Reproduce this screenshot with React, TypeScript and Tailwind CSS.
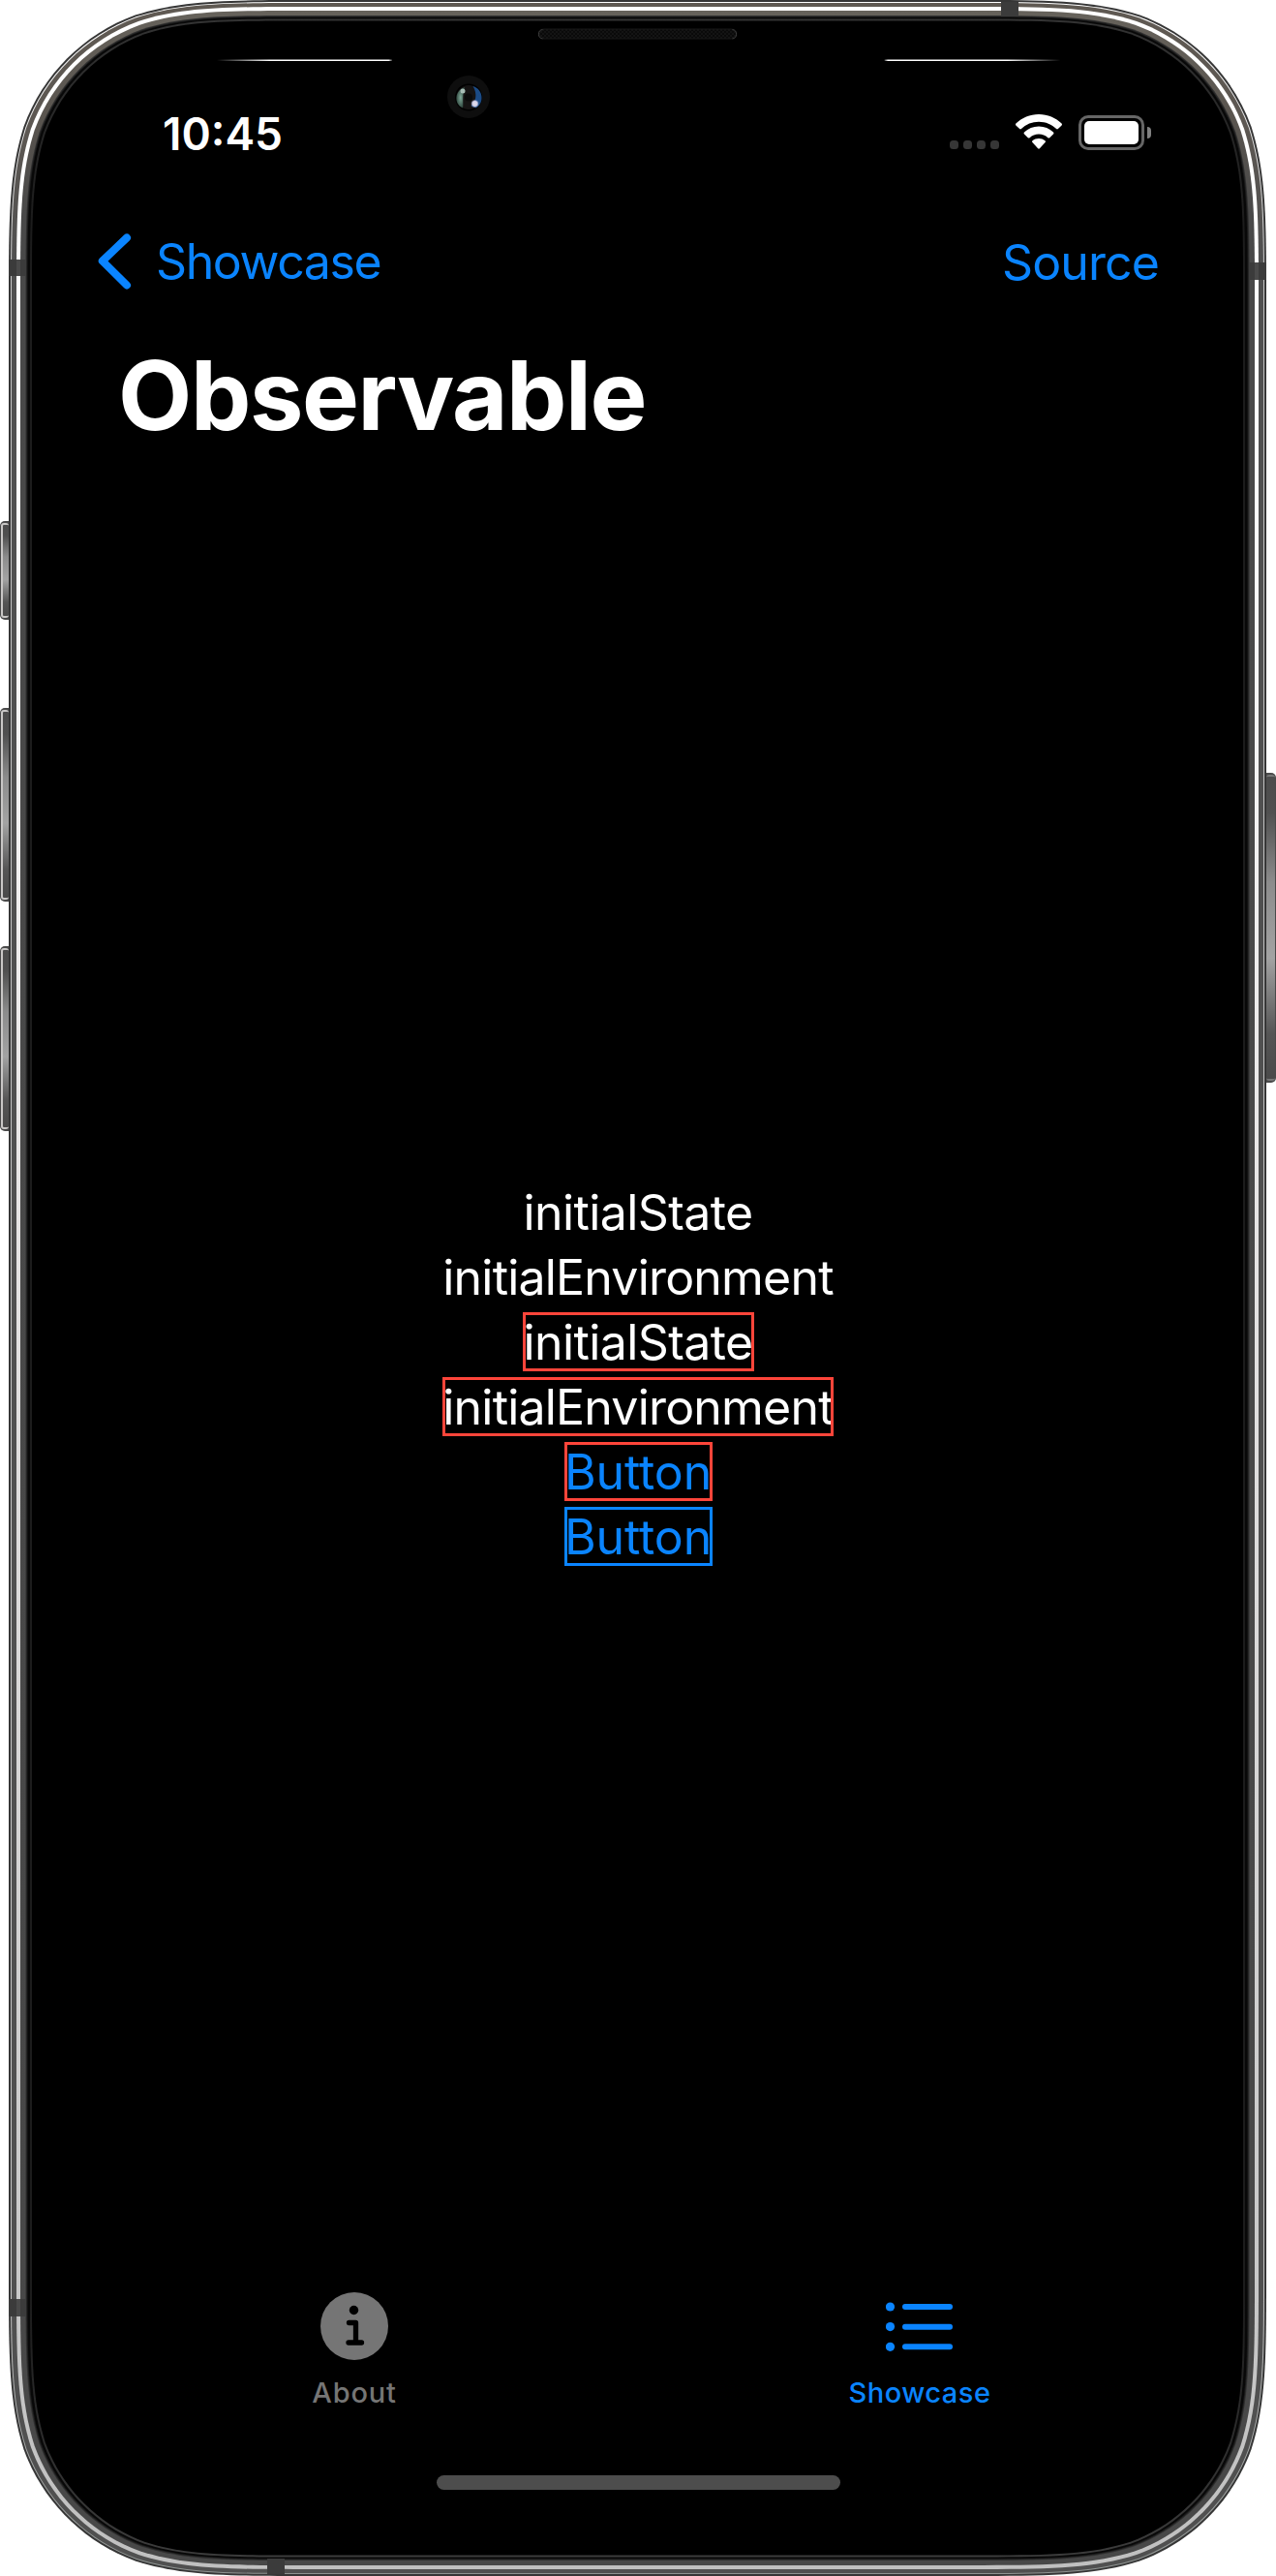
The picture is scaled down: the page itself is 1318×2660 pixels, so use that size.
import React from "react";

/** Rounded rectangle with continuous-curvature corners. */
function smoothRect(x0: number, y0: number, x1: number, y1: number, r: number) {
  const a = 1.5287 * r;
  const b = 1.0885 * r;
  const c = 0.8684 * r;
  const d = 0.6315 * r;
  const e = 0.0749 * r;
  const f = 0.3728 * r;
  const g = 0.1691 * r;
  return [
    `M${x0 + a} ${y0}H${x1 - a}`,
    `C${x1 - b} ${y0} ${x1 - c} ${y0} ${x1 - d} ${y0 + e}`,
    `C${x1 - f} ${y0 + g} ${x1 - g} ${y0 + f} ${x1 - e} ${y0 + d}`,
    `C${x1} ${y0 + c} ${x1} ${y0 + b} ${x1} ${y0 + a}`,
    `V${y1 - a}`,
    `C${x1} ${y1 - b} ${x1} ${y1 - c} ${x1 - e} ${y1 - d}`,
    `C${x1 - g} ${y1 - f} ${x1 - f} ${y1 - g} ${x1 - d} ${y1 - e}`,
    `C${x1 - c} ${y1} ${x1 - b} ${y1} ${x1 - a} ${y1}`,
    `H${x0 + a}`,
    `C${x0 + b} ${y1} ${x0 + c} ${y1} ${x0 + d} ${y1 - e}`,
    `C${x0 + f} ${y1 - g} ${x0 + g} ${y1 - f} ${x0 + e} ${y1 - d}`,
    `C${x0} ${y1 - c} ${x0} ${y1 - b} ${x0} ${y1 - a}`,
    `V${y0 + a}`,
    `C${x0} ${y0 + b} ${x0} ${y0 + c} ${x0 + e} ${y0 + d}`,
    `C${x0 + g} ${y0 + f} ${x0 + f} ${y0 + g} ${x0 + d} ${y0 + e}`,
    `C${x0 + c} ${y0} ${x0 + b} ${y0} ${x0 + a} ${y0}Z`,
  ].join("");
}

/** Frame ring: side inset and top/bottom inset from the outer edge. */
function ring(side: number, cap: number) {
  return smoothRect(9 + side, cap, 1308 - side, 2660 - cap, 207 - (side + cap) / 2);
}

function SideButton({ x, y, w, h, flip }: { x: number; y: number; w: number; h: number; flip?: boolean }) {
  return (
    <g>
      <rect x={x} y={y} width={w + 6} height={h} rx="5" fill="#4a4a4a" transform={flip ? "translate(-6 0)" : undefined} />
      <rect x={flip ? x : x + 1} y={y + 2} width={w - 1} height={h - 4} rx="3" fill={flip ? "#777" : "#c9c7c6"} />
      <rect x={flip ? x : x + 3} y={y + 4} width={flip ? w - 1 : w - 3} height={h - 8} rx="1" fill="url(#key)" />
    </g>
  );
}

function DeviceFrame() {
  return (
    <svg className="pointer-events-none absolute inset-0" width="1318" height="2660" viewBox="0 0 1318 2660" aria-hidden="true">
      <defs>
        <linearGradient id="key" x1="0" y1="0" x2="0" y2="1">
          <stop offset="0" stopColor="#4c4c4c" />
          <stop offset="0.12" stopColor="#505050" />
          <stop offset="0.35" stopColor="#8c8c8c" />
          <stop offset="0.6" stopColor="#a3a3a3" />
          <stop offset="0.85" stopColor="#555" />
          <stop offset="1" stopColor="#4a4a4a" />
        </linearGradient>
        <linearGradient id="steel" x1="0" y1="0" x2="0" y2="1">
          <stop offset="0" stopColor="#5f5952" />
          <stop offset="0.05" stopColor="#5c5752" />
          <stop offset="0.1" stopColor="#505050" />
          <stop offset="1" stopColor="#505050" />
        </linearGradient>
        <linearGradient id="steelIn" x1="0" y1="0" x2="0" y2="1">
          <stop offset="0" stopColor="#66625b" />
          <stop offset="0.04" stopColor="#5a554f" />
          <stop offset="0.08" stopColor="#494949" />
          <stop offset="1" stopColor="#484848" />
        </linearGradient>
        <linearGradient id="shine" x1="0" y1="0" x2="0" y2="1">
          <stop offset="0" stopColor="#fff" />
          <stop offset="0.2" stopColor="#fcfcfc" />
          <stop offset="0.45" stopColor="#e8e6e6" />
          <stop offset="0.85" stopColor="#cbcbcb" />
          <stop offset="1" stopColor="#c0c0c0" />
        </linearGradient>
        <linearGradient id="hair" x1="0" y1="0" x2="0" y2="1">
          <stop offset="0" stopColor="#fff" />
          <stop offset="0.12" stopColor="#c4c4c4" />
          <stop offset="0.9" stopColor="#c4c4c4" />
          <stop offset="1" stopColor="#8d9290" />
        </linearGradient>
        <linearGradient id="rim" x1="0" y1="0" x2="0" y2="1">
          <stop offset="0" stopColor="#333" />
          <stop offset="0.08" stopColor="#1c1c1c" />
          <stop offset="0.9" stopColor="#1c1c1c" />
          <stop offset="1" stopColor="#3c3c3c" />
        </linearGradient>
        <linearGradient id="glintL">
          <stop offset="0" stopColor="#fff" stopOpacity="0" />
          <stop offset="0.3" stopColor="#fff" />
          <stop offset="0.98" stopColor="#fff" />
          <stop offset="1" stopColor="#fff" stopOpacity="0.2" />
        </linearGradient>
        <linearGradient id="glintR">
          <stop offset="0" stopColor="#fff" stopOpacity="0.2" />
          <stop offset="0.02" stopColor="#fff" />
          <stop offset="0.7" stopColor="#fff" />
          <stop offset="1" stopColor="#fff" stopOpacity="0" />
        </linearGradient>
        <radialGradient id="green">
          <stop offset="0" stopColor="#7fa898" />
          <stop offset="1" stopColor="#30483f" />
        </radialGradient>
        <radialGradient id="spark">
          <stop offset="0" stopColor="#e2e0ef" />
          <stop offset="0.65" stopColor="#cfcde4" />
          <stop offset="1" stopColor="#8f9cc4" stopOpacity="0.3" />
        </radialGradient>
        <pattern id="mesh" width="4" height="4" patternUnits="userSpaceOnUse">
          <rect width="4" height="4" fill="#141414" />
          <rect width="2" height="2" fill="#0a0a0a" />
          <rect x="2" y="2" width="2" height="2" fill="#0a0a0a" />
        </pattern>
      </defs>

      <SideButton x={0} y={538} w={9} h={102} />
      <SideButton x={0} y={731} w={9} h={200} />
      <SideButton x={0} y={977} w={9} h={191} />
      <SideButton x={1308} y={798} w={10} h={320} flip />

      <path d={ring(0, 0)} fill="#363636" />
      <path d={ring(2, 2)} fill="url(#hair)" />
      <path d={ring(3, 3)} fill="url(#steel)" />
      <path d={ring(8, 7)} fill="url(#shine)" />
      <path d={ring(12, 11)} fill="url(#steelIn)" />
      <path d={ring(17.5, 16)} fill="#303030" />
      <path d={ring(18.5, 17)} fill="#1b1b1b" />
      <path d={ring(19.5, 18)} fill="#080808" />
      <path d={ring(22, 19.5)} fill="url(#rim)" />
      <path d={ring(24, 21.5)} fill="#000" />

      <path fill="#3b3b3b" d="M9 268h18v17H9zM9 2374h18v18H9zM1290 271h18v18h-18zM1034 2h18v15h-18zM276 2642h18v16h-18z" />
      <path d="M17 268h4v17h-4zM17 2374h4v18h-4zM1296 271h4v18h-4z" fill="#4a4a4a" />

      <rect x="224" y="61.5" width="181" height="1.5" fill="url(#glintL)" />
      <rect x="913.5" y="61.5" width="182" height="1.5" fill="url(#glintR)" />

      <rect x="556.5" y="30" width="204" height="10" rx="5" fill="url(#mesh)" stroke="#191919" />
      <path d="M560.500 30.500a4.800 4.800 0 0 0 0 9.500M756.500 30.500a4.800 4.800 0 0 1 0 9.500" fill="none" stroke="#3c3c3c" />

      <circle cx="484" cy="100" r="22" fill="#0e0e0e" />
      <circle cx="484" cy="100.500" r="14" fill="#000" />
      <circle cx="484" cy="100.500" r="12.500" fill="#151313" />
      <path d="M480 90c-10 3-12 17-2 21.500 1-4-1-12 2-21.500Z" fill="url(#green)" />
      <path d="M488.500 89c11 3 12 18 3 22.500l-5-2c5-5 7-12 2-20.500Z" fill="#1b4b86" />
      <circle cx="478" cy="94" r="2.500" fill="#a7bdb5" />
      <circle cx="490.500" cy="107" r="4" fill="url(#spark)" />
      <circle cx="484" cy="100.500" r="4" fill="#0a0a0a" />
    </svg>
  );
}

function WifiIcon() {
  return (
    <svg width="48" height="36" viewBox="0 0 48 36" fill="#fff" aria-hidden="true">
      <path d="M24 0C14.800 0 6.500 3.600.4 9.500a1.300 1.300 0 0 0 0 1.900l3.700 3.700a1.300 1.300 0 0 0 1.800 0A26.200 26.200 0 0 1 24 7.800c7 0 13.400 2.800 18.100 7.300.5.500 1.300.5 1.800 0l3.700-3.700c.5-.5.5-1.400 0-1.900C41.500 3.600 33.200 0 24 0Z" />
      <path d="M24 12.600c-5.800 0-11 2.200-15 5.900-.6.500-.6 1.400 0 1.900l3.800 3.800c.5.500 1.300.5 1.800 0a13.800 13.800 0 0 1 18.800 0c.5.500 1.300.5 1.800 0l3.800-3.800c.6-.5.6-1.400 0-1.900-4-3.700-9.200-5.900-15-5.900Z" />
      <path d="M24 25.100c-2.500 0-4.700.8-6.500 2.200-.6.500-.6 1.300-.1 1.800l5.700 6.200c.5.500 1.300.5 1.800 0l5.700-6.200c.5-.5.5-1.300-.1-1.800a10.500 10.500 0 0 0-6.500-2.200Z" />
    </svg>
  );
}

function StatusBar() {
  return (
    <div className="mt-[114px] flex h-12 items-start pr-[129px] pl-[168px]">
      <span className="text-[46px] leading-[48px] font-semibold">10:45</span>
      <div className="ml-auto flex h-[41px] items-end">
        <div className="flex gap-[5px] pb-px">
          {[0, 1, 2, 3].map((i) => (
            <span key={i} className="size-[9px] rounded-[3.500px] bg-[#363636]" />
          ))}
        </div>
        <div className="ml-[17px] pb-px"><WifiIcon /></div>
        <div className="ml-[17px] h-9 w-[68px] rounded-[10px] border-[3px] border-[#666] p-[3px]">
          <div className="h-full rounded-[5px] bg-white" />
        </div>
        <span className="mb-3 ml-[3px] h-3 w-1 rounded-r-full bg-[#808080]" />
      </div>
    </div>
  );
}

function NavBar() {
  return (
    <nav className="mt-[78px] flex h-[60px] items-start justify-between pr-[121px] pl-[101px] text-[50px] leading-[60px] text-[#0a84ff]">
      <button className="flex items-start">
        <svg width="36" height="60" viewBox="0 0 36 60" fill="none" stroke="currentColor" strokeWidth="8" strokeLinecap="round" strokeLinejoin="round" aria-hidden="true">
          <path d="M30 5.500 4.800 29.500 30 54.500" />
        </svg>
        <span className="ml-6 tracking-[-1.4px]">Showcase</span>
      </button>
      <button className="pt-px tracking-[-0.9px]">Source</button>
    </nav>
  );
}

const frame = "relative flex h-[61px] items-center justify-center whitespace-nowrap";

function Showcase() {
  return (
    <main className="mt-[753px] flex flex-1 flex-col items-center gap-1.5 text-[50px] leading-[61px]">
      <div className={frame + " w-[239px] pt-px tracking-[-0.6px]"}>initialState</div>
      <div className={frame + " w-[404px] pt-px tracking-[-0.8px]"}>initialEnvironment</div>
      <div className={frame + " w-[239px] pt-px tracking-[-0.6px] after:absolute after:inset-0 after:border-[3px] after:border-[#ff453a]"}>initialState</div>
      <div className={frame + " w-[404px] pt-px tracking-[-0.8px] after:absolute after:inset-0 after:border-[3px] after:border-[#ff453a]"}>initialEnvironment</div>
      <button className={frame + " w-[153px] pt-px tracking-[-0.1px] text-[#0a84ff] after:absolute after:inset-0 after:border-[3px] after:border-[#ff453a]"}>Button</button>
      <button className={frame + " w-[153px] pt-px tracking-[-0.1px] text-[#0a84ff] after:absolute after:inset-0 after:border-[3px] after:border-[#0a84ff]"}>Button</button>
    </main>
  );
}

function TabBar() {
  return (
    <footer className="flex h-[293px] flex-col items-center">
      <div className="flex w-full pr-[76px] pl-[74px] text-[29px] leading-9 font-medium">
        <button className="flex flex-1 flex-col items-center text-[#757575]">
          <svg width="70" height="70" viewBox="0 0 70 70" aria-hidden="true">
            <circle cx="35" cy="35" r="35" fill="currentColor" />
            <circle cx="34.500" cy="18.500" r="4.700" fill="#000" />
            <path d="M29.500 31.500h7v20M29 52h13.500" fill="none" stroke="#000" strokeWidth="5.300" strokeLinecap="round" strokeLinejoin="round" />
          </svg>
          <span className="mt-4 tracking-[0.8px]">About</span>
        </button>
        <button className="flex flex-1 flex-col items-center text-[#0a84ff]">
          <svg width="70" height="70" viewBox="0 0 70 70" fill="currentColor" aria-hidden="true">
            <circle cx="4.500" cy="15" r="4.600" />
            <circle cx="4.500" cy="35.600" r="4.600" />
            <circle cx="4.500" cy="56.300" r="4.600" />
            <rect x="17" y="12" width="52" height="6" rx="3" />
            <rect x="17" y="32.700" width="52" height="6" rx="3" />
            <rect x="17" y="53.300" width="52" height="6" rx="3" />
          </svg>
          <span className="mt-4 tracking-[0.5px]">Showcase</span>
        </button>
      </div>
      <div className="mt-[67px] h-[15px] w-[417px] rounded-full bg-[#4d4d4d]" />
    </footer>
  );
}

export default function App() {
  return (
    <div className="relative h-[2660px] w-[1318px] overflow-hidden bg-white font-['Inter',sans-serif] text-white">
      <DeviceFrame />
      <div className="relative flex h-full flex-col">
        <StatusBar />
        <NavBar />
        <h1 className="mt-12 pl-[122px] text-[99px] leading-[120px] font-bold tracking-[-1.4px]">Observable</h1>
        <Showcase />
        <TabBar />
      </div>
    </div>
  );
}
